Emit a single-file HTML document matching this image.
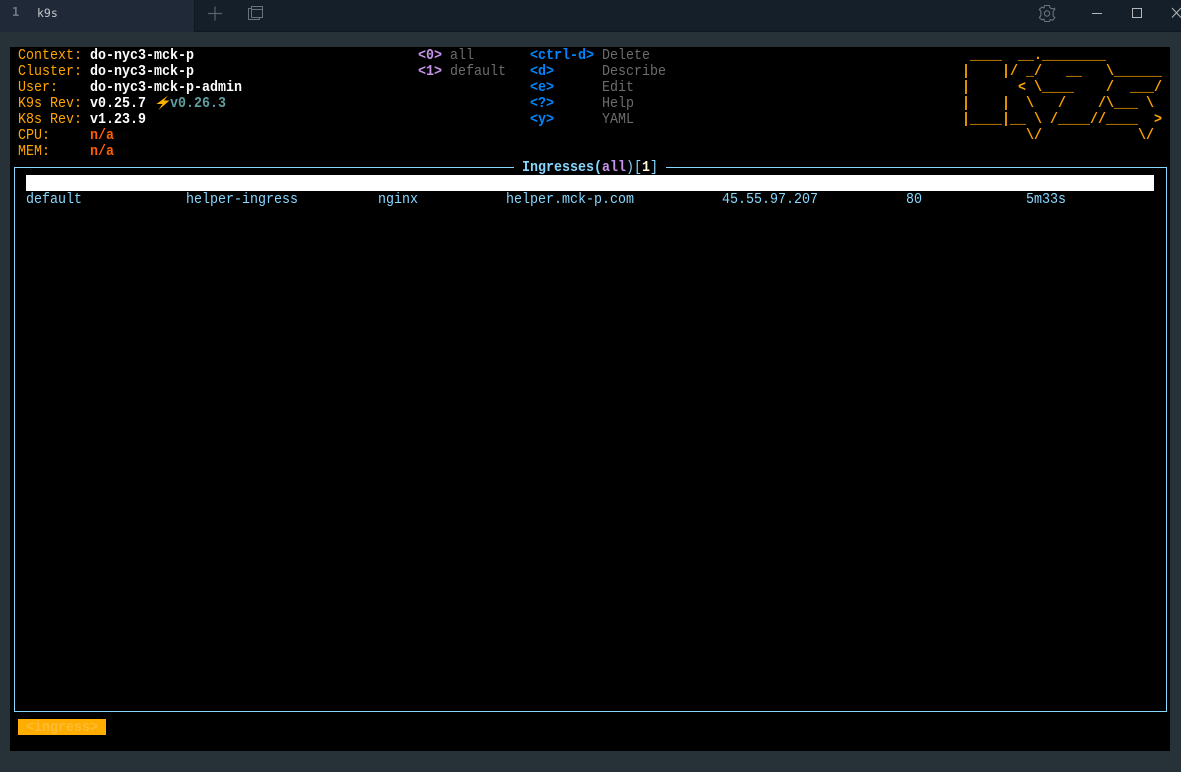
<!DOCTYPE html>
<html>
<head>
<meta charset="utf-8">
<style>
html,body{margin:0;padding:0;width:1181px;height:772px;overflow:hidden;background:#263238;}
#bar{position:absolute;left:0;top:0;width:1181px;height:31px;background:#141f2a;border-bottom:1px solid #10181f;}
#tab{position:absolute;left:0;top:0;width:194px;height:32px;background:#1f2937;border-right:1px solid #10181f;box-sizing:content-box;}
.ui{position:absolute;font:12px/14px "DejaVu Sans Mono","Liberation Mono",monospace;color:#c4c8cc;white-space:pre;}
#term{position:absolute;left:10px;top:47px;width:1160px;height:704px;background:#000;}
.t{position:absolute;font:15px/16px "Liberation Mono",monospace;transform:scaleX(.8889);transform-origin:0 0;margin-top:1px;white-space:pre;height:16px;}
.o{color:#ffa500}.w{color:#fff;font-weight:bold}.r{color:#ff5f00;font-weight:bold}
.l{color:#ffa500;font-weight:bold}
.p{color:#c792ea;font-weight:bold}.b{color:#0087ff;font-weight:bold}.g{color:#6c6c6c}
.c{color:#87d7ff}.cb{color:#87d7ff;font-weight:bold}
svg{position:absolute;overflow:visible}
</style>
</head>
<body>
<div id="bar"></div>
<div id="tab"></div>
<div class="ui" style="left:12px;top:5px;font-weight:bold;color:#6f7780;">1</div>
<div class="ui" style="left:37px;top:6px;font-size:11.5px;">k9s</div>

<svg style="left:0;top:0" width="1181" height="32" fill="none">
  <path d="M208 13.5H222M215 6.5V20.5" stroke="#5a626b" stroke-width="1.2"/>
  <path d="M251.5 6.5H262.5V17.5H251.5ZM251.5 9.5H262.5" stroke="#6a727a" stroke-width="1"/>
  <path d="M251.5 8.5H248.5V19.5H259.5V17.5" stroke="#6a727a" stroke-width="1"/>
  <path d="M1044.6 5.5H1049.4L1050 7.8L1052 8.9L1054.4 8.3L1054.9 9.2L1053.2 11.1V15.9L1054.9 17.8L1052.8 20.2L1050.2 19.6L1049.4 21.5H1044.6L1044 19.2L1041.8 19.8L1039.3 17.6L1040.9 15.6V11.4L1039.3 9.4L1041.8 7.2L1044 7.8Z" stroke="#6a727a" stroke-width="1.1" stroke-linejoin="round"/>
  <circle cx="1047" cy="13.5" r="2.7" stroke="#6a727a" stroke-width="1.1"/>
  <path d="M1092 13.5H1102" stroke="#b4b8bc" stroke-width="1"/>
  <rect x="1132.5" y="8.5" width="9" height="9" stroke="#b4b8bc" stroke-width="1"/>
  <path d="M1172 8L1181 17.5M1181 8L1172 17.5" stroke="#b4b8bc" stroke-width="1"/>
</svg>

<div id="term"></div>

<!-- header left -->
<div class="t o" style="left:18px;top:47px">Context:</div><div class="t w" style="left:90px;top:47px">do-nyc3-mck-p</div>
<div class="t o" style="left:18px;top:63px">Cluster:</div><div class="t w" style="left:90px;top:63px">do-nyc3-mck-p</div>
<div class="t o" style="left:18px;top:79px">User:</div><div class="t w" style="left:90px;top:79px">do-nyc3-mck-p-admin</div>
<div class="t o" style="left:18px;top:95px">K9s Rev:</div><div class="t w" style="left:90px;top:95px">v0.25.7</div>
<svg style="left:155px;top:95px" width="16" height="16"><path d="M13 0.5L1.5 9H7.5L3.5 15L14.5 5.5H9Z" fill="#ffb000"/></svg>
<div class="t" style="left:170px;top:95px;color:#5f9ea0;font-weight:bold">v0.26.3</div>
<div class="t o" style="left:18px;top:111px">K8s Rev:</div><div class="t w" style="left:90px;top:111px">v1.23.9</div>
<div class="t o" style="left:18px;top:127px">CPU:</div><div class="t r" style="left:90px;top:127px">n/a</div>
<div class="t o" style="left:18px;top:143px">MEM:</div><div class="t r" style="left:90px;top:143px">n/a</div>

<!-- namespaces -->
<div class="t p" style="left:418px;top:47px">&lt;0&gt;</div><div class="t g" style="left:450px;top:47px">all</div>
<div class="t p" style="left:418px;top:63px">&lt;1&gt;</div><div class="t g" style="left:450px;top:63px">default</div>

<!-- menu -->
<div class="t b" style="left:530px;top:47px">&lt;ctrl-d&gt;</div><div class="t g" style="left:602px;top:47px">Delete</div>
<div class="t b" style="left:530px;top:63px">&lt;d&gt;</div><div class="t g" style="left:602px;top:63px">Describe</div>
<div class="t b" style="left:530px;top:79px">&lt;e&gt;</div><div class="t g" style="left:602px;top:79px">Edit</div>
<div class="t b" style="left:530px;top:95px">&lt;?&gt;</div><div class="t g" style="left:602px;top:95px">Help</div>
<div class="t b" style="left:530px;top:111px">&lt;y&gt;</div><div class="t g" style="left:602px;top:111px">YAML</div>

<!-- logo -->
<div class="t l" style="left:962px;top:47px"> ____  __.________       </div>
<div class="t l" style="left:962px;top:63px">|    |/ _/   __   \______</div>
<div class="t l" style="left:962px;top:79px">|      &lt; \____    /  ___/</div>
<div class="t l" style="left:962px;top:95px">|    |  \   /    /\___ \ </div>
<div class="t l" style="left:962px;top:111px">|____|__ \ /____//____  &gt;</div>
<div class="t l" style="left:962px;top:127px">        \/            \/ </div>

<!-- table frame -->
<div style="position:absolute;left:14px;top:167px;width:1151px;height:543px;border:1px solid #87d7ff;"></div>
<div style="position:absolute;left:514px;top:160px;width:152px;height:15px;background:#000;"></div>
<div class="t cb" style="left:522px;top:159px">Ingresses(<span class="p">all</span><span style="font-weight:normal">)[</span><span style="color:#ffffd7">1</span><span style="font-weight:normal">]</span></div>

<div style="position:absolute;left:26px;top:175px;width:1128px;height:16px;background:#fff;"></div>

<div class="t c" style="left:26px;top:191px">default</div>
<div class="t c" style="left:186px;top:191px">helper-ingress</div>
<div class="t c" style="left:378px;top:191px">nginx</div>
<div class="t c" style="left:506px;top:191px">helper.mck-p.com</div>
<div class="t c" style="left:722px;top:191px">45.55.97.207</div>
<div class="t c" style="left:906px;top:191px">80</div>
<div class="t c" style="left:1026px;top:191px">5m33s</div>

<div style="position:absolute;left:18px;top:719px;width:88px;height:16px;background:#ffad00;"></div>
<div class="t" style="left:26px;top:719px;color:#ffbb33;font-weight:bold">&lt;ingress&gt;</div>
</body>
</html>
